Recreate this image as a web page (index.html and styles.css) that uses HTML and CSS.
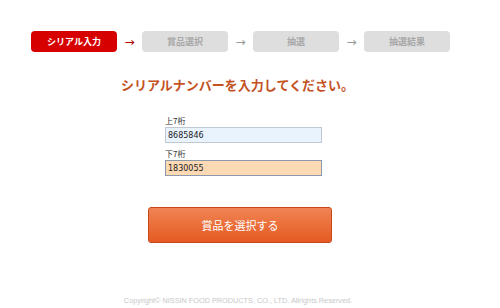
FILE: index.html
```html
<!DOCTYPE html>
<html>
<head>
	<meta charset="utf8">
	<title>シリアル入力</title>
	<link rel="stylesheet" href="styles.css">
</head>
<body>
	<div id="pagina">
		<div class="steps">
			<span class="step ativo">シリアル入力</span>
			<span class="seta ativo">&rarr;</span>
			<span class="step">賞品選択</span>
			<span class="seta">&rarr;</span>
			<span class="step">抽選</span>
			<span class="seta">&rarr;</span>
			<span class="step">抽選結果</span>
		</div>
		<h1>シリアルナンバーを入力してください。</h1>
		<form class="form">
			<label for="cima">上7桁</label>
			<input type="text" id="cima" class="campo azul" value="8685846">
			<label for="baixo">下7桁</label>
			<input type="text" id="baixo" class="campo laranja" value="1830055">
			<button type="button" class="botao">賞品を選択する</button>
		</form>
		<p class="copy">Copyright&copy; NISSIN FOOD PRODUCTS, CO., LTD. Allrights Reserved.</p>
	</div>
</body>
</html>
```
FILE: styles.css
```css
body{
	margin: 0;
	background: #fff;
}
#pagina{
	font-family: "Noto Sans CJK JP", "Liberation Sans", sans-serif;
	width: 500px;
	height: 308px;
	color: #333;
}
.steps{
	display: flex;
	align-items: center;
	padding-top: 31px;
	padding-left: 31px;
}
.step{
	width: 86px;
	height: 21px;
	line-height: 21px;
	border-radius: 4px;
	background-color: #dedede;
	color: #a8a8a8;
	font-size: 9px;
	font-weight: bold;
	text-align: center;
}
.step.ativo{
	background-color: #d60000;
	color: #fff;
}
.seta{
	width: 25px;
	text-align: center;
	font-size: 12px;
	color: #999;
	font-family: "DejaVu Sans", sans-serif;
}
.seta.ativo{
	color: #b00000;
}
h1{
	margin: 23px 0 0 0;
	padding-left: 121px;
	font-size: 13px;
	line-height: 20px;
	font-weight: bold;
	color: #c3521f;
}
.form{
	margin: 20px 0 0 165px;
	width: 157px;
}
label{
	display: block;
	font-size: 8px;
	line-height: 11px;
	color: #333;
}
.campo{
	display: block;
	box-sizing: border-box;
	width: 157px;
	height: 16px;
	margin: 1px 0 5px 0;
	padding: 0 0 0 2px;
	border: 1px solid #a9b3c4;
	font-family: "DejaVu Sans", sans-serif;
	font-size: 8px;
	color: #222;
}
.azul{
	background-color: #e8f3fe;
	border-color: #c0c8d4;
}
.laranja{
	background-color: #fdd9b4;
	border-color: #8c98ab;
}
.botao{
	display: block;
	box-sizing: border-box;
	width: 184px;
	height: 36px;
	margin: 31px 0 0 -17px;
	border: 1px solid #c9461a;
	border-radius: 3px;
	background: linear-gradient(#f08454, #e45a22);
	color: #fff;
	font-family: "Noto Sans CJK JP", sans-serif;
	font-size: 11px;
}
.copy{
	margin: 53px 0 0 0;
	padding-right: 24px;
	text-align: center;
	font-family: "Liberation Sans", sans-serif;
	font-size: 7.3px;
	color: #c8c8c8;
}
```
